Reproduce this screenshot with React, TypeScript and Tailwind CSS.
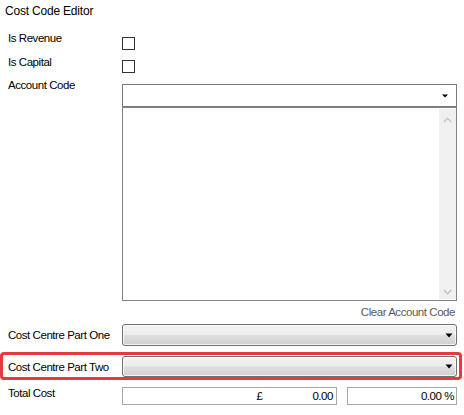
import React from "react";

function Checkbox() {
  return <div className="mt-[6px] h-[13px] w-[13px] border border-[#333333] bg-white" />;
}

function DropArrow({ size = "sm" }: { size?: "sm" | "md" }) {
  return size === "sm" ? (
    <svg width="6" height="4" viewBox="0 0 6 4" className="block">
      <path d="M0 0.5 L6 0.5 L3 3.5 Z" fill="#000" />
    </svg>
  ) : (
    <svg width="8" height="5" viewBox="0 0 8 5" className="block">
      <path d="M0.5 0.5 L7.5 0.5 L4 4.5 Z" fill="#000" />
    </svg>
  );
}

function GradientCombo({ height }: { height: string }) {
  return (
    <div
      className={`${height} w-[335px] flex items-center justify-end pr-[3px] rounded-[3px] border border-[#707070] bg-[linear-gradient(to_bottom,#f3f3f3_0%,#ececec_48%,#dedede_52%,#d0d0d0_100%)] shadow-[inset_0_0_0_1px_rgba(255,255,255,0.75)]`}
    >
      <DropArrow size="md" />
    </div>
  );
}

function Chevron({ dir }: { dir: "up" | "down" }) {
  return (
    <svg width="9" height="6" viewBox="0 0 9 6" className="block">
      <polyline
        points={dir === "up" ? "0.8,5 4.5,1.2 8.2,5" : "0.8,1 4.5,4.8 8.2,1"}
        fill="none"
        stroke="#c4c4c4"
        strokeWidth="1.4"
      />
    </svg>
  );
}

export default function App() {
  return (
    <div className="w-[464px] h-[415px] bg-white text-black font-['Liberation_Sans',Arial,sans-serif] text-[11.5px] tracking-[-0.45px] leading-[14px] pt-[4px] overflow-hidden">
      {/* Title */}
      <div className="h-[14px] pl-[5px] text-[12px] tracking-[-0.2px]">Cost Code Editor</div>

      {/* Is Revenue */}
      <div className="mt-[13px] flex items-start">
        <div className="w-[122px] pl-[8px]">Is Revenue</div>
        <Checkbox />
      </div>

      {/* Is Capital */}
      <div className="mt-[5px] flex items-start">
        <div className="w-[122px] pl-[8px]">Is Capital</div>
        <div className="-mt-[1px]">
          <Checkbox />
        </div>
      </div>

      {/* Account Code */}
      <div className="mt-[5px] flex items-start">
        <div className="w-[122px] pl-[8px]">Account Code</div>
        <div className="mt-[6px] h-[23px] w-[335px] border border-[#7a7a7a] bg-white flex items-center justify-end pr-[8px]">
          <DropArrow />
        </div>
      </div>

      {/* Account code list */}
      <div className="ml-[122px] h-[194px] w-[335px] border border-[#828282] bg-white flex">
        <div className="flex-1" />
        <div className="w-[17px] my-[1px] bg-[#f0f0f0] flex flex-col items-center justify-between pt-[8px] pb-[4px]">
          <Chevron dir="up" />
          <Chevron dir="down" />
        </div>
      </div>

      {/* Clear link */}
      <div className="mt-[4px] h-[14px] pr-[9px] text-right text-[#5a5a5a]">Clear Account Code</div>

      {/* Cost Centre Part One */}
      <div className="mt-[5px] flex items-center">
        <div className="w-[122px] pl-[8px]">Cost Centre Part One</div>
        <GradientCombo height="h-[22px]" />
      </div>

      {/* Cost Centre Part Two, highlighted */}
      <div className="relative mt-[10px] flex items-center">
        <div className="w-[122px] pl-[8px]">Cost Centre Part Two</div>
        <GradientCombo height="h-[21px]" />
        <div className="pointer-events-none absolute left-[0px] right-[2px] -top-[4px] -bottom-[3px] rounded-[4px] border-[3px] border-[#e8393c]" />
      </div>

      {/* Total Cost */}
      <div className="mt-[9px] flex items-start">
        <div className="w-[122px] pl-[8px]">Total Cost</div>
        <div className="mt-[1px] h-[18px] w-[215px] border border-[#a9a9a9] bg-white flex items-center justify-end pr-[3px]">
          <span className="mr-[50px]">£</span>
          <span>0.00</span>
        </div>
        <div className="ml-[10px] mt-[1px] h-[18px] w-[110px] border border-[#a9a9a9] bg-white flex items-center justify-end pr-[2px]">
          <span>0.00 %</span>
        </div>
      </div>
    </div>
  );
}
